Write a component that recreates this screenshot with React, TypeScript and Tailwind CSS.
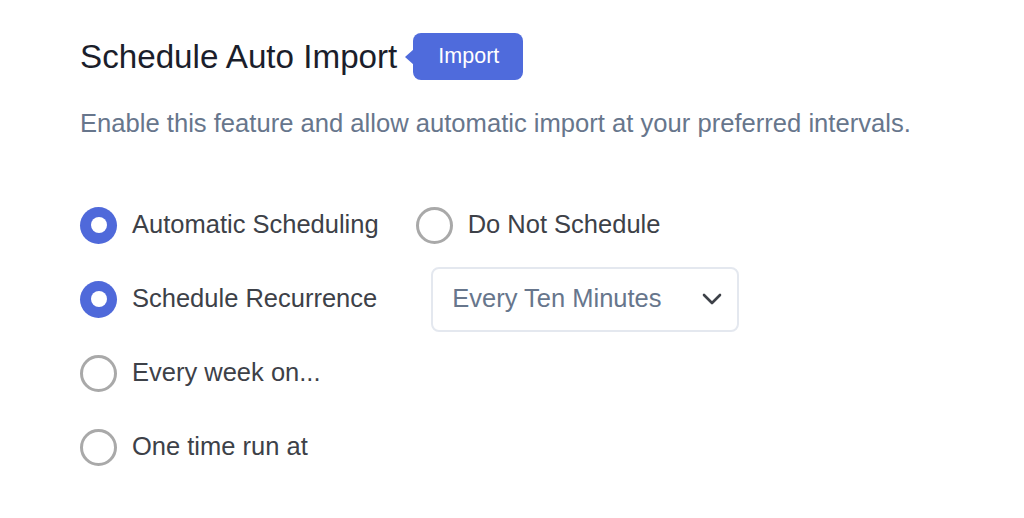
import React from "react";

const font = { fontFamily: '"Liberation Sans", Arial, sans-serif' };

function Radio({ checked }: { checked: boolean }) {
  if (checked) {
    return (
      <span className="flex h-[37px] w-[37px] shrink-0 items-center justify-center rounded-full bg-[#4f69da]">
        <span className="h-[16px] w-[16px] rounded-full bg-white" />
      </span>
    );
  }
  return <span className="block h-[37px] w-[37px] shrink-0 rounded-full border-[3px] border-[#a9a9a9] bg-white" />;
}

function RadioItem({ checked, label }: { checked: boolean; label: string }) {
  return (
    <label className="flex items-center gap-[15px]">
      <Radio checked={checked} />
      <span className="text-[25.5px] leading-none text-[#3d4148]">{label}</span>
    </label>
  );
}

export default function App() {
  return (
    <div className="min-h-[518px] w-[1024px] bg-white pl-[80px] pt-[33px]" style={font}>
      <div className="flex h-[47px] items-center">
        <h1 className="text-[33.2px] font-normal leading-none text-[#1b1e2b]">Schedule Auto Import</h1>
        <div className="relative ml-[16px] flex h-[47px] items-center rounded-lg bg-[#4f6bdc] pl-[25px] pr-[24px]">
          <span className="absolute left-[-8px] top-1/2 h-0 w-0 -translate-y-1/2 border-y-[8px] border-r-[9px] border-y-transparent border-r-[#4f6bdc]" />
          <span className="text-[21.5px] leading-none text-white">Import</span>
        </div>
      </div>
      <p className="mt-[28px] text-[25.6px] leading-[30px] text-[#67768c]">
        Enable this feature and allow automatic import at your preferred intervals.
      </p>
      <div className="mt-[50px] flex flex-col">
        <div className="flex h-[74px] items-center">
          <RadioItem checked label="Automatic Scheduling" />
          <div className="ml-[37px]">
            <RadioItem checked={false} label="Do Not Schedule" />
          </div>
        </div>
        <div className="flex h-[74px] items-center">
          <RadioItem checked label="Schedule Recurrence" />
          <div className="ml-[54px] flex h-[65px] w-[308px] items-center justify-between rounded-lg border-2 border-[#e4e8ef] bg-white pl-[19px] pr-[15px]">
            <span className="text-[25.5px] leading-none text-[#67768c]">Every Ten Minutes</span>
            <svg width="20" height="12" viewBox="0 0 20 12" fill="none">
              <path d="M2 2l8 8 8-8" stroke="#3d4148" strokeWidth="2.6" strokeLinecap="round" strokeLinejoin="round" />
            </svg>
          </div>
        </div>
        <div className="flex h-[74px] items-center">
          <RadioItem checked={false} label="Every week on..." />
        </div>
        <div className="flex h-[74px] items-center">
          <RadioItem checked={false} label="One time run at" />
        </div>
      </div>
    </div>
  );
}
